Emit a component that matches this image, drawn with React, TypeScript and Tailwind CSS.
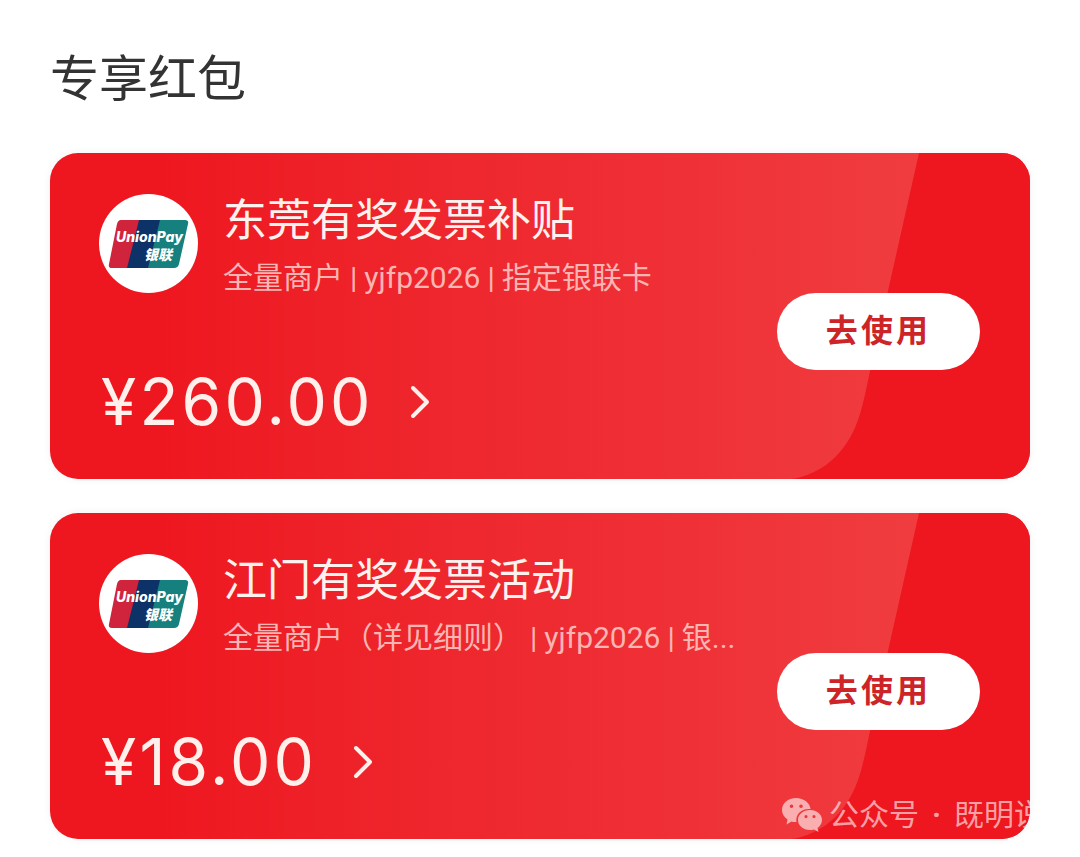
type Coupon = {
  title: string;
  details: string[];
  amount: string;
};

const coupons: Coupon[] = [
  {
    title: "东莞有奖发票补贴",
    details: ["全量商户", "yjfp2026", "指定银联卡"],
    amount: "260.00",
  },
  {
    title: "江门有奖发票活动",
    details: ["全量商户（详见细则）", "yjfp2026", "银..."],
    amount: "18.00",
  },
];

export default function App() {
  return (
    <main className="bg-white px-[50px] pt-12 pb-[18px] font-[Roboto,'Noto_Sans_CJK_SC',sans-serif]">
      <h1 className="text-[49px] leading-[64px] text-[#333333]">专享红包</h1>

      <section className="relative mt-[41px] flex flex-col gap-[34px]">
        {coupons.map((coupon) => (
          <CouponCard key={coupon.title} coupon={coupon} />
        ))}
        <Watermark />
      </section>
    </main>
  );
}

function CouponCard({ coupon }: { coupon: Coupon }) {
  return (
    <article className="relative flex items-center justify-between overflow-hidden rounded-[28px] bg-linear-to-r from-[#ee161f] from-10% via-[#ef2e35] via-60% to-[#f03d40] to-90% py-[41px] pr-[50px] pl-[49px] shadow-[0_0_8px_rgba(0,0,0,0.06)]">
      {/* Darker right side */}
      <svg
        className="absolute top-0 right-0 h-full"
        viewBox="0 0 250 326"
        fill="#ee161f"
        aria-hidden="true"
      >
        <path d="M139 0 L90 218 C85 242 81 264 72 281 C61 302 42 321 12 326 H250 V0 Z" />
      </svg>

      <div className="relative flex flex-col gap-[58px]">
        <div className="flex items-start gap-[25px]">
          <UnionPayLogo />
          <div>
            <h2 className="text-[44px] leading-[54px] text-[#fff1ee]">{coupon.title}</h2>
            <p className="flex gap-[7px] text-[30px] leading-[60px] whitespace-nowrap text-[#fbb5b2]">
              {coupon.details.map((detail, i) => (
                <span key={detail} className="flex gap-[7px]">
                  {i > 0 && <span>|</span>}
                  {detail}
                </span>
              ))}
            </p>
          </div>
        </div>

        <a href="#" className="flex items-center gap-9 pl-0.5 text-[#fff0ec]">
          <span className="font-[Inter,sans-serif] text-[64px] leading-[72px] tracking-wider">
            ¥{coupon.amount}
          </span>
          <svg width="20" height="34" viewBox="0 0 20 34" fill="none" aria-hidden="true">
            <path
              d="M3 3 L17 17 L3 31"
              stroke="currentColor"
              strokeWidth="4"
              strokeLinecap="round"
              strokeLinejoin="round"
            />
          </svg>
        </a>
      </div>

      <button
        type="button"
        className="relative mt-[30px] h-[77px] w-[203px] shrink-0 rounded-full bg-white text-[32px] font-bold tracking-widest text-[#cc2427]"
      >
        去使用
      </button>
    </article>
  );
}

function UnionPayLogo() {
  return (
    <svg className="size-[99px] shrink-0" viewBox="0 0 99 99" role="img" aria-label="UnionPay">
      <circle cx="49.5" cy="49.5" r="49.5" fill="#ffffff" />
      <path d="M22 26 H46 L35 74 H13 Q9 74 10 70 L18 30 Q19 26 22 26 Z" fill="#d0243c" />
      <path d="M40 26 H66 L55 74 H28 Z" fill="#0c3268" />
      <path d="M61 26 H86 Q90 26 89 30 L80 70 Q79 74 75 74 H49 Z" fill="#16807f" />
      <text
        x="17"
        y="48"
        fontFamily="Inter, sans-serif"
        fontSize="14"
        fontWeight="800"
        fontStyle="italic"
        fill="#ffffff"
      >
        UnionPay
      </text>
      <text
        x="45"
        y="66"
        fontFamily="'Noto Sans CJK SC', sans-serif"
        fontSize="14"
        fontWeight="900"
        fontStyle="italic"
        fill="#ffffff"
      >
        银联
      </text>
    </svg>
  );
}

function Watermark() {
  return (
    <div className="absolute -right-[14px] bottom-1 flex items-center gap-1.5 text-white/60">
      <svg width="42" height="36" viewBox="0 0 42 36" fill="currentColor" aria-hidden="true">
        <path
          fillRule="evenodd"
          d="M15 1 C23 1 29 6 29.500 12 C21 11 14 17 15.500 25 C13.500 25.200 12 25 10.500 24.500 L5.500 27.500 L6.500 22.500 C3 20 1 17 1 13 C1 6 7 1 15 1 Z M10.500 7.500 A1.800 1.800 0 1 0 10.500 11.100 A1.800 1.800 0 1 0 10.500 7.500 Z M20 7.500 A1.800 1.800 0 1 0 20 11.100 A1.800 1.800 0 1 0 20 7.500 Z"
        />
        <path
          fillRule="evenodd"
          d="M29 13 C36 13 41 17.500 41 23 C41 26.500 39 29 36.500 31 L37.500 35 L33 32.500 C31.500 33 30.500 33 29 33 C22 33 17 28.500 17 23 C17 17.500 22 13 29 13 Z M25 18 A1.600 1.600 0 1 0 25 21.200 A1.600 1.600 0 1 0 25 18 Z M33 18 A1.600 1.600 0 1 0 33 21.200 A1.600 1.600 0 1 0 33 18 Z"
        />
      </svg>
      <p className="flex gap-[13px] text-[30px] leading-10 whitespace-nowrap">
        <span>公众号</span>
        <span className="font-bold">·</span>
        <span>既明说</span>
      </p>
    </div>
  );
}
